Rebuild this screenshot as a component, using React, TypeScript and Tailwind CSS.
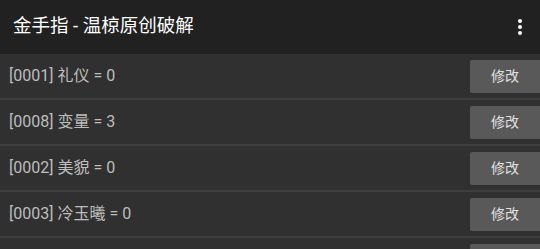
import React from "react";

const items = [
  { id: "0001", name: "礼仪", value: 0 },
  { id: "0008", name: "变量", value: 3 },
  { id: "0002", name: "美貌", value: 0 },
  { id: "0003", name: "冷玉曦", value: 0 },
];

const font = { fontFamily: 'Roboto, "Noto Sans CJK SC", sans-serif' };

export default function App() {
  return (
    <div className="w-[540px] h-[249px] overflow-hidden bg-[#303030]" style={font}>
      {/* App bar */}
      <div className="flex h-[54px] items-center justify-between bg-[#212121] pl-[13px] pr-[18px]">
        <h1 className="text-[18.5px] text-white">金手指 - 温椋原创破解</h1>
        <div className="flex flex-col items-center gap-[2px]">
          <span className="h-[4px] w-[4px] rounded-full bg-white" />
          <span className="h-[4px] w-[4px] rounded-full bg-white" />
          <span className="h-[4px] w-[4px] rounded-full bg-white" />
        </div>
      </div>

      {/* List */}
      <div className="flex flex-col">
        {items.map((item) => (
          <div
            key={item.id}
            className="flex h-[46px] shrink-0 items-start justify-between border-b-2 border-[#3e3e3e] pl-[9px]"
          >
            <span className="mt-[10px] text-[16px] leading-[24px] text-[#bdbdbd]">
              [{item.id}] {item.name} = {item.value}
            </span>
            <button className="mt-[6px] h-[33px] w-[70px] shrink-0 rounded-l-[2px] bg-[#595959] text-[14px] text-[#e0e0e0]">
              修改
            </button>
          </div>
        ))}
        {/* next row, only its button top shows */}
        <div className="flex h-[46px] shrink-0 justify-end">
          <div className="mt-[6px] h-[33px] w-[70px] rounded-l-[2px] bg-[#595959]" />
        </div>
      </div>
    </div>
  );
}
